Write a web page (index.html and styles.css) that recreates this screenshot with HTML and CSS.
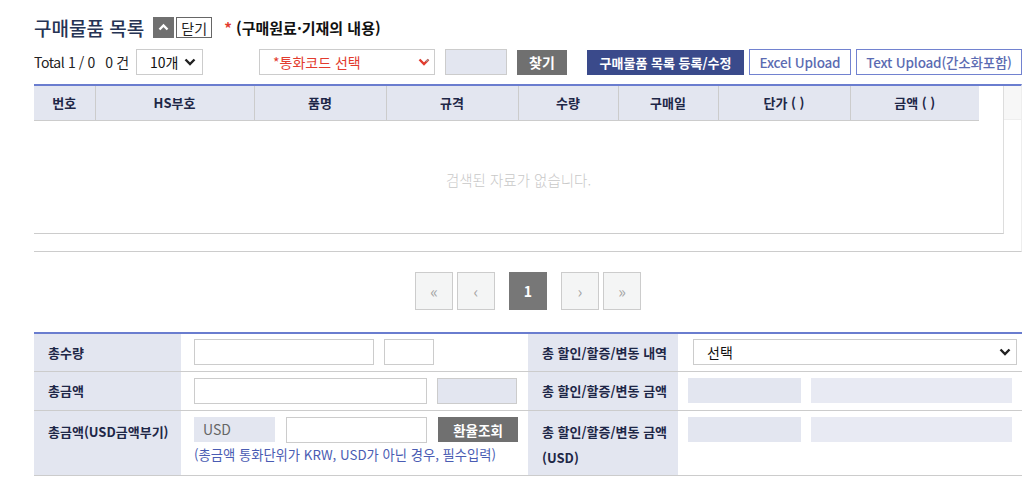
FILE: index.html
```html
<!DOCTYPE html>
<html lang="ko">
<head>
    <meta charset="UTF-8">
    <title>구매물품 목록</title>
    <link rel="stylesheet" href="styles.css">
</head>
<body>
    <div class="section">
        <div class="title-row">
            <h3 class="title">구매물품 목록</h3>
            <button class="btn-fold">
                <svg width="21" height="21" viewBox="0 0 21 21"><path d="M6.5 12.5 L10.5 8.5 L14.5 12.5" fill="none" stroke="#fff" stroke-width="2.4"/></svg>
            </button>
            <button class="btn-close">닫기</button>
            <span class="title-note"><em>*</em> (구매원료·기재의 내용)</span>
        </div>

        <div class="toolbar">
            <span class="total">Total 1 / 0 &nbsp; 0 건</span>
            <div class="select select-count">
                <span>10개</span>
                <svg width="12" height="8" viewBox="0 0 12 8"><path d="M1.5 1.5 L6 6 L10.5 1.5" fill="none" stroke="#222" stroke-width="2.4"/></svg>
            </div>
            <div class="select select-currency">
                <span>*통화코드 선택</span>
                <svg width="12" height="8" viewBox="0 0 12 8"><path d="M1.5 1.5 L6 6 L10.5 1.5" fill="none" stroke="#e23b2e" stroke-width="2.4"/><path d="M8 3.5 L10.5 1.5" stroke="#999" stroke-width="1.2"/></svg>
            </div>
            <input type="text" class="input-code" disabled>
            <button class="btn-gray btn-find">찾기</button>
            <button class="btn-navy">구매물품 목록 등록/수정</button>
            <button class="btn-line btn-excel">Excel Upload</button>
            <button class="btn-line btn-text">Text Upload(간소화포함)</button>
        </div>

        <div class="grid">
            <div class="grid-body">
                <table class="grid-head">
                    <tr>
                        <th class="c-no">번호</th>
                        <th class="c-hs">HS부호</th>
                        <th class="c-name">품명</th>
                        <th class="c-spec">규격</th>
                        <th class="c-qty">수량</th>
                        <th class="c-date">구매일</th>
                        <th class="c-price">단가 ( )</th>
                        <th class="c-amt">금액 ( )</th>
                    </tr>
                </table>
                <div class="grid-empty">검색된 자료가 없습니다.</div>
            </div>
            <div class="grid-gutter">
                <div class="gutter-head"></div>
            </div>
        </div>

        <div class="paging">
            <a class="page-btn">&laquo;</a>
            <a class="page-btn">&lsaquo;</a>
            <a class="page-btn current">1</a>
            <a class="page-btn">&rsaquo;</a>
            <a class="page-btn">&raquo;</a>
        </div>

        <table class="form-table">
            <colgroup>
                <col class="w-label1">
                <col class="w-value1">
                <col class="w-label2">
                <col class="w-value2">
            </colgroup>
            <tr class="row-1">
                <th>총수량</th>
                <td>
                    <div class="field-line">
                        <input type="text" class="in-qty">
                        <input type="text" class="in-unit">
                    </div>
                </td>
                <th>총 할인/할증/변동 내역</th>
                <td>
                    <div class="select select-type">
                        <span>선택</span>
                        <svg width="12" height="8" viewBox="0 0 12 8"><path d="M1.5 1.5 L6 6 L10.5 1.5" fill="none" stroke="#222" stroke-width="2.4"/></svg>
                    </div>
                </td>
            </tr>
            <tr class="row-2">
                <th>총금액</th>
                <td>
                    <div class="field-line">
                        <input type="text" class="in-amount">
                        <input type="text" class="in-cur" disabled>
                    </div>
                </td>
                <th>총 할인/할증/변동 금액</th>
                <td class="td-boxes">
                    <div class="field-line">
                        <span class="box box-a"></span>
                        <span class="box box-b"></span>
                    </div>
                </td>
            </tr>
            <tr class="row-3">
                <th>총금액(USD금액부기)</th>
                <td>
                    <div class="field-line gap-11">
                        <span class="box box-usd">USD</span>
                        <input type="text" class="in-usd">
                        <button class="btn-gray btn-rate">환율조회</button>
                    </div>
                    <p class="hint">(총금액 통화단위가 KRW, USD가 아닌 경우, 필수입력)</p>
                </td>
                <th>총 할인/할증/변동 금액<br>(USD)</th>
                <td class="td-boxes">
                    <div class="field-line">
                        <span class="box box-a"></span>
                        <span class="box box-b"></span>
                    </div>
                </td>
            </tr>
        </table>
    </div>
</body>
</html>
```

FILE: styles.css
```css
* {
    margin: 0;
    padding: 0;
    box-sizing: border-box;
}
body {
    font-family: "Noto Sans CJK KR", "Noto Sans", sans-serif;
    font-size: 13px;
    color: #222;
    background: #fff;
}
button, input {
    font-family: inherit;
    font-size: 13px;
}
.section {
    padding: 17px 5px 0 34px;
}

/* title */
.title-row {
    display: flex;
    align-items: center;
    height: 21px;
}
.title {
    font-size: 19px;
    font-weight: 500;
    color: #263354;
    line-height: 21px;
}
.btn-fold {
    width: 21px;
    height: 21px;
    margin-left: 9px;
    border: none;
    background: #707070;
    display: flex;
}
.btn-close {
    width: 36px;
    height: 21px;
    margin-left: 2px;
    border: 1px solid #666;
    background: #fff;
    color: #222;
    font-size: 14px;
    line-height: 18px;
}
.title-note {
    margin-left: 12px;
    font-size: 15px;
    font-weight: bold;
    color: #111;
}
.title-note em {
    font-style: normal;
    color: #e23b2e;
}

/* toolbar */
.toolbar {
    display: flex;
    align-items: center;
    height: 26px;
    margin-top: 11px;
}
.total {
    width: 102px;
    font-size: 14px;
    color: #222;
    letter-spacing: -0.4px;
}
.select {
    height: 26px;
    border: 1px solid #ccc;
    background: #fff;
    display: flex;
    align-items: center;
    justify-content: space-between;
    font-size: 14px;
}
.select-count {
    width: 67px;
    padding: 0 6px 0 13px;
    color: #111;
}
.select-currency {
    width: 176px;
    margin-left: 56px;
    padding: 0 4px 0 13px;
    color: #e23b2e;
}
.input-code {
    width: 62px;
    height: 26px;
    margin-left: 10px;
    border: 1px solid #ccc;
    background: #e3e6f0;
}
.btn-gray {
    border: none;
    background: #707070;
    color: #fff;
    font-weight: bold;
}
.btn-find {
    width: 50px;
    height: 25px;
    margin-left: 10px;
    font-size: 14px;
}
.btn-navy {
    width: 157px;
    height: 25px;
    margin-left: 20px;
    border: none;
    background: #3a4a8b;
    color: #fff;
    font-weight: bold;
}
.btn-line {
    height: 26px;
    margin-left: 5px;
    border: 1px solid #7282d0;
    background: #fff;
    color: #5b6bb2;
    font-size: 13.5px;
    font-weight: 500;
    letter-spacing: -0.2px;
}
.btn-excel { width: 102px; }
.btn-text { width: 166px; }

/* grid */
.grid {
    display: flex;
    height: 168px;
    margin-top: 9px;
    border-top: 2px solid #6a7dcf;
    border-bottom: 1px solid #ccc;
    border-right: 1px solid #eee;
}
.grid-body {
    width: 970px;
    height: 148px;
    border-right: 1px solid #ddd;
    border-bottom: 1px solid #ccc;
}
.grid-head {
    width: 945px;
    border-collapse: collapse;
    table-layout: fixed;
}
.grid-head th {
    height: 34px;
    background: #e3e6f0;
    border-left: 1px solid #ccc;
    border-bottom: 1px solid #ccc;
    color: #1e2747;
    font-weight: bold;
    font-size: 13px;
}
.grid-head th:first-child { border-left: none; }
.c-no { width: 61px; }
.c-hs { width: 159px; }
.c-name { width: 132px; }
.c-spec { width: 132px; }
.c-qty { width: 100px; }
.c-date { width: 100px; }
.c-price { width: 132px; }
.c-amt { width: 129px; }
.grid-empty {
    height: 112px;
    padding-top: 6px;
    display: flex;
    align-items: center;
    justify-content: center;
    color: #c8c8c8;
    font-size: 14.5px;
    font-weight: 300;
}
.grid-gutter {
    flex: 1;
}
.gutter-head {
    height: 34px;
    background: #f7f7f7;
    border-bottom: 1px solid #eee;
}

/* paging */
.paging {
    display: flex;
    justify-content: center;
    margin-top: 20px;
}
.page-btn {
    width: 38px;
    height: 38px;
    border: 1px solid #ccc;
    background: #f4f5f5;
    color: #a6a6a6;
    font-size: 16px;
    display: flex;
    align-items: center;
    justify-content: center;
    margin: 0 2px;
}
.page-btn.current {
    border-color: #777;
    background: #777;
    color: #fff;
    font-weight: bold;
    font-size: 14px;
    margin: 0 12px;
}

/* form */
.form-table {
    width: 988px;
    margin-top: 22px;
    border-collapse: collapse;
    table-layout: fixed;
    border-top: 2px solid #6a7dcf;
}
.w-label1 { width: 147px; }
.w-value1 { width: 347px; }
.w-label2 { width: 150px; }
.w-value2 { width: 344px; }
.form-table th {
    background: #e3e6f0;
    text-align: left;
    padding-left: 14px;
    font-weight: bold;
    font-size: 13px;
    color: #1e2747;
    border-bottom: 1px solid #ccc;
}
.form-table td {
    padding-left: 13px;
    border-bottom: 1px solid #ccc;
}
.form-table td.td-boxes {
    padding-left: 10px;
}
.row-1 th, .row-1 td { height: 38px; }
.row-2 th, .row-2 td { height: 39px; }
.row-3 th, .row-3 td {
    height: 65px;
    vertical-align: top;
}
.row-3 th {
    padding-top: 8px;
    line-height: 26px;
}
.row-3 td {
    padding-top: 6px;
}
.field-line {
    display: flex;
    align-items: center;
    gap: 10px;
}
.gap-11 { gap: 11px; }
.field-line input {
    height: 26px;
    border: 1px solid #ccc;
    background: #fff;
}
.in-qty { width: 180px; }
.in-unit { width: 50px; }
.in-amount { width: 233px; }
.in-cur {
    width: 80px;
    background: #e3e6f0 !important;
}
.in-usd { width: 141px; }
.btn-rate {
    width: 80px;
    height: 25px;
    font-size: 13.5px;
}
.box {
    height: 25px;
    background: #e3e6f0;
}
.box-usd {
    width: 81px;
    padding-left: 9px;
    line-height: 25px;
    color: #666;
    font-size: 14px;
}
.box-a { width: 113px; }
.box-b {
    width: 201px;
    background: #e8eaf3;
}
.select-type {
    width: 324px;
    margin-left: 2px;
    padding: 0 5px 0 13px;
    color: #111;
}
.hint {
    margin-top: 2px;
    color: #4a5cb3;
    font-size: 13.3px;
    line-height: 20px;
}
```
